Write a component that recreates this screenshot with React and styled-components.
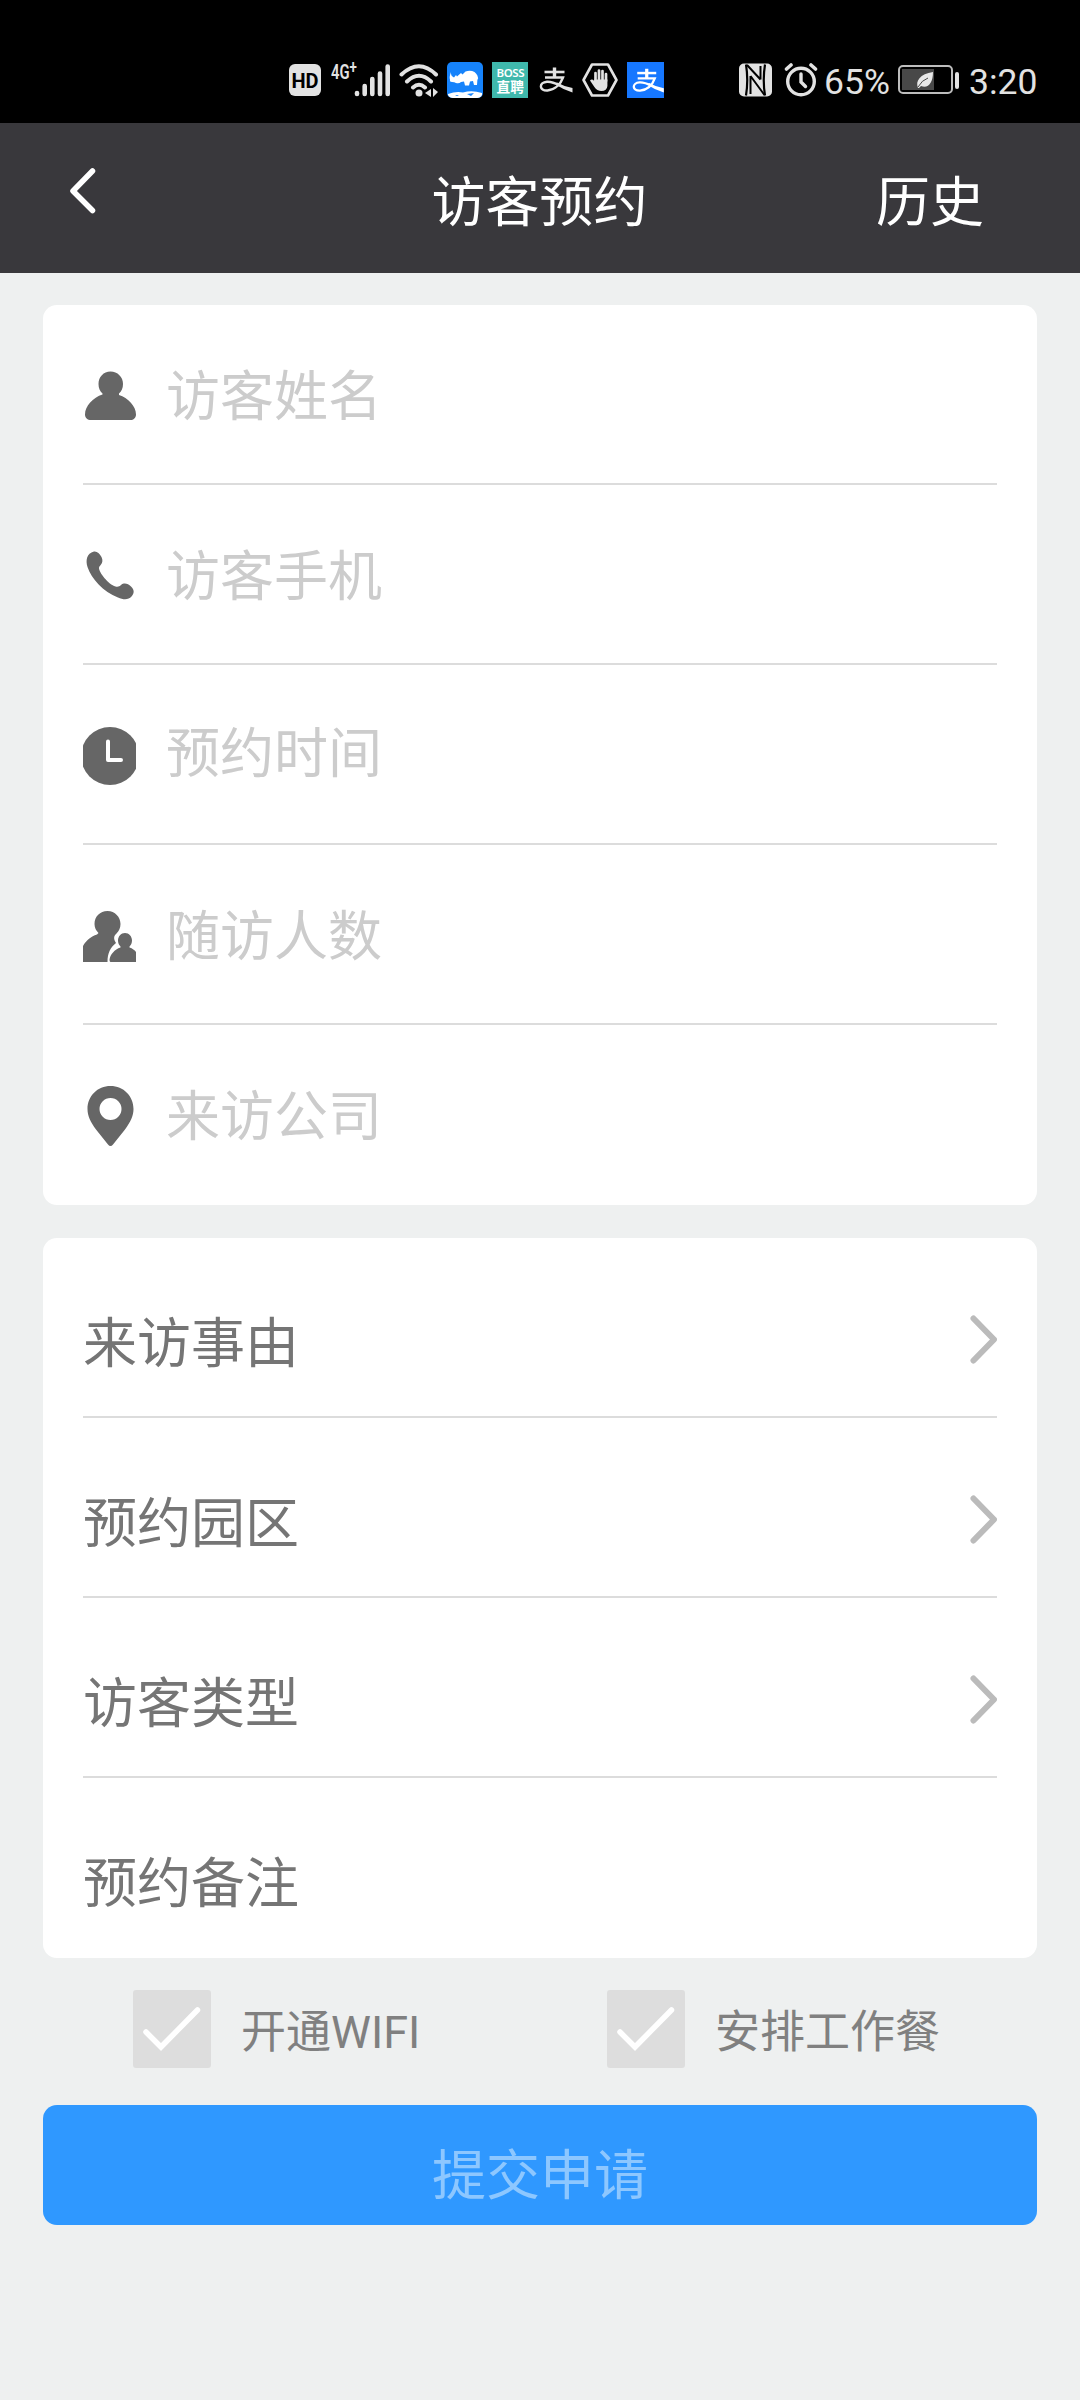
import React, { useState } from "react";
import styled, { createGlobalStyle } from "styled-components";

const fields = [
  { label: "访客姓名", icon: "user" },
  { label: "访客手机", icon: "phone" },
  { label: "预约时间", icon: "clock", drop: 1 },
  { label: "随访人数", icon: "users" },
  { label: "来访公司", icon: "pin" },
];

const options = [
  { label: "来访事由", arrow: true },
  { label: "预约园区", arrow: true },
  { label: "访客类型", arrow: true },
  { label: "预约备注", arrow: false },
];

const FieldIcon = ({ name }) => (
  <IconBox viewBox="0 0 53 62">
    {name === "user" && (
      <path d="M27.500 6.500C34.500 6.500 40 12 40 19c0 4-1.500 7.500-4 9.500v1.500c9 3 17 11 17 19.500 0 3.500-2.500 5.500-5.500 5.500H8c-3.500 0-6-2-6-5.500C2 41 10 32.500 19.500 29.500V28.500C17 26.500 15.500 23 15.500 19c0-7 5-12.500 12-12.500z" />
    )}
    {name === "phone" && (
      <path d="M11 6.500c3-.5 5.500 2 7.500 5.500 1.500 3 1 5.500-.5 7.500-1 1.500-2 2-2 3.500 0 4.500 9.500 16.500 16.500 18.500 2.500.5 4 0 5.500-1.500 3-2.500 7-1.500 10 1.500 3.500 3.500 3.500 6.500.5 10-3 3.500-8 3.500-13.500 1C20 46.500 8.500 34 4.500 22c-2-6.500-1-13.500 6.500-15.500z" />
    )}
    {name === "clock" && (
      <>
        <circle cx="27" cy="31" r="29" />
        <path d="M25 16.500v18.500h13" fill="none" stroke="#fff" strokeWidth="4" strokeLinecap="round" strokeLinejoin="round" />
      </>
    )}
    {name === "users" && (
      <>
        <path d="M24.500 6C32 6 37.500 12 37.500 19c0 4-1.500 7-4 9.500-3 2.500-3 5.500-.5 9.500-5.500 4.500-8.500 10-8.500 19H0V41c3.500-6 8-9.500 14-11.500l1.500-1.500C13 25.500 11.500 22.500 11.500 19 11.500 11.500 17 6 24.500 6z" />
        <path d="M42 28c4 0 7 3.500 7 7.500 0 2.500-1 4.500-2.500 6v1c3 1 5 2.500 6.500 4.500v10H27.500c-2-1-.5-6.500 2.500-9.500 2-2.500 4.500-4 7.500-5v-1c-1.500-1.500-2.500-3.500-2.500-6 0-4 3-7.500 7-7.500z" />
      </>
    )}
    {name === "pin" && (
      <path
        fillRule="evenodd"
        d="M27.500 1c13 0 23 10 23 23 0 7-3 13-8.500 20.500L30 59.500q-2.500 3-5 0L13 44.500C7.500 37 4.500 31 4.500 24c0-13 10-23 23-23zM27.500 13a11 11 0 1 0 .01 22 11 11 0 0 0-.01-22z"
      />
    )}
  </IconBox>
);

const PayMark = () => (
  <>
    <g fill="none" stroke="currentColor">
      <path d="M5.500 9h20" strokeWidth="2.600" />
      <path d="M15.500 4.500v10" strokeWidth="3.400" />
      <path d="M6 14.500h18C22 20 17 26.500 8.500 27.500 0 28 -.5 19.500 8 18.800 13 18.500 17 20.500 21 22.500" strokeWidth="2.400" />
    </g>
    <path d="M18 19.500q7 4 15.500 5.500v4.500Q24 26.500 16.500 21.500z" fill="currentColor" />
  </>
);

const StatusIcons = () => (
  <>
    <Glyphs>
      <svg width="32" height="32" viewBox="0 0 32 32">
        <rect width="32" height="32" rx="6" fill="#e2e2e2" />
        <text x="16" y="23.500" textAnchor="middle" fontFamily="Roboto, sans-serif" fontSize="20" fontWeight="700" fill="#000">HD</text>
      </svg>
      <Signal>
        <Network>
          4G<Plus>+</Plus>
        </Network>
        <Bars width="38" height="36" viewBox="0 0 38 36">
          <path d="M4 32v-1M11.700 32v-8M19.300 32v-15M27 32V11.500M34.700 32V4.500" stroke="#e2e2e2" strokeWidth="4.600" strokeLinecap="round" />
        </Bars>
      </Signal>
      <Wifi width="40" height="36" viewBox="0 0 40 36">
        <g fill="none" stroke="#e2e2e2" strokeWidth="4" strokeLinecap="round">
          <path d="M2.500 12.500Q20 -4 37 12.500M8 19.500Q20 8 32 19.500M14 25.500Q20 20 26 25.500" />
        </g>
        <circle cx="20" cy="31" r="3.500" fill="#e2e2e2" />
        <path d="M32 27v8l-6-4zM34 26l5 4-5 5z" fill="#e2e2e2" />
      </Wifi>
      <Rhino width="36" height="36" viewBox="0 0 36 36">
        <rect width="36" height="36" rx="5" fill="#1683fb" />
        <path d="M4 10q-.5 4 3 5.500L9 13l1 1.500 4-3.500 1.500 1.500 3-3q5-1.500 9 .5 4 3 3.500 8l-.5-1.500-.5 6.500h-3l-1-4-3 .5-1 4h-4l-1-4-3 .5q-2 2-5 1-1.500-1-4-1-2.500 0-2-2.500Q2 15.500 4 10z" fill="#fff" />
        <path d="M1 32q8-3 15-1.500 9-2.500 19 .5v2q-1.500 3-5 3H6q-3.500 0-5-3z" fill="#fff" />
        <path d="M20 32l7-1-3 3zM8 33h4l-2 1z" fill="#1683fb" />
      </Rhino>
      <svg width="36" height="36" viewBox="0 0 36 36">
        <rect width="36" height="36" fill="#3fb8ac" />
        <text x="4.500" y="14.500" textLength="28" fontFamily="'Noto Sans', sans-serif" fontSize="11.500" fontWeight="600" fill="#fff">BOSS</text>
        <text x="4.500" y="30" fontFamily="'Noto Sans CJK SC', sans-serif" fontSize="13.700" fontWeight="700" fill="#fff">直聘</text>
      </svg>
      <Pay width="35" height="34" viewBox="0 0 35 34">
        <PayMark />
      </Pay>
      <svg width="36" height="36" viewBox="0 0 36 36">
        <path d="M10 2.500h16L34.500 18 26 33.500H10L1.500 18z" fill="none" stroke="#e2e2e2" strokeWidth="2.600" strokeLinejoin="round" />
        <g stroke="#e2e2e2" strokeWidth="2.700" strokeLinecap="round">
          <path d="M13.500 19V11M17 18V8.500M20.500 18V9M24 19v-7" />
        </g>
        <path d="M12.200 17.500h13.200V24q-.5 5-6 5-4.500 0-7-4L8 18.500q2-2 4.200.5z" fill="#e2e2e2" />
      </svg>
      <BluePay width="37" height="36" viewBox="0 0 37 36">
        <rect width="37" height="36" fill="#1677ff" />
        <g transform="translate(5 2.500) scale(.95)">
          <PayMark />
        </g>
      </BluePay>
    </Glyphs>
    <Readout>
      <svg width="34" height="34" viewBox="0 0 34 34">
        <rect y=".5" width="33" height="33" rx="5" fill="#e2e2e2" />
        <path d="M7 1.500Q9.500 17 7 32.500M26 1.500Q23.500 17 26 32.500" stroke="#000" strokeWidth="2.200" fill="none" />
        <path d="M8 2l13.500 14.500M11.500 13L25.500 32M11.500 13v18M21.500 3v13.500" stroke="#000" strokeWidth="2" fill="none" />
      </svg>
      <Alarm width="34" height="34" viewBox="0 0 34 34">
        <g fill="none" stroke="#e2e2e2" strokeLinecap="round">
          <circle cx="17" cy="18.500" r="13.300" strokeWidth="3.400" />
          <path d="M17 11v8l4.500 4.500" strokeWidth="3.400" />
          <path d="M2.500 6L7 2M31.500 6L27 2" strokeWidth="3.600" />
        </g>
      </Alarm>
      <StatusText width="65">65%</StatusText>
      <Battery width="62" height="30" viewBox="0 0 62 30">
        <rect x="1" y="1" width="53" height="27" rx="4" fill="none" stroke="#bdbdbd" strokeWidth="2" />
        <rect x="4" y="4" width="32" height="21" fill="#484848" />
        <path d="M20 23c-3-7 2-14 15-16 0 11-5 17-12 14l-2 2z" fill="#e8e8e8" />
        <path d="M20 22q4-7 10-9" stroke="#484848" fill="none" />
        <rect x="57" y="7" width="4" height="17" rx="2" fill="#e2e2e2" />
      </Battery>
      <StatusText width="69">3:20</StatusText>
    </Readout>
  </>
);

const App = () => {
  const [wifi, setWifi] = useState(false);
  const [meal, setMeal] = useState(false);

  return (
    <Page>
      <GlobalStyle />
      <StatusBar>
        <StatusIcons />
      </StatusBar>
      <Header>
        <Back viewBox="0 0 28 46">
          <path d="M23.500 3L4 23l19.500 19.500" />
        </Back>
        <Title>访客预约</Title>
        <History>历史</History>
      </Header>
      <Body>
        <Card>
          {fields.map((item) => (
            <Row key={item.label}>
              <FieldIcon name={item.icon} />
              <Placeholder drop={item.drop}>{item.label}</Placeholder>
            </Row>
          ))}
        </Card>
        <Card>
          {options.map((item) => (
            <Row key={item.label}>
              <Label>{item.label}</Label>
              {item.arrow ? (
                <Arrow viewBox="0 0 27 49">
                  <path d="M3.500 3.500L24 24.500 3.500 45.500" />
                </Arrow>
              ) : null}
            </Row>
          ))}
        </Card>
        <Checks>
          <CheckItem onClick={() => setWifi(!wifi)}>
            <CheckBox checked={wifi} viewBox="0 0 78 78">
              <path d="M13 42l15 15L64.500 20" />
            </CheckBox>
            <CheckText>开通WIFI</CheckText>
          </CheckItem>
          <CheckItem onClick={() => setMeal(!meal)}>
            <CheckBox checked={meal} viewBox="0 0 78 78">
              <path d="M13 42l15 15L64.500 20" />
            </CheckBox>
            <CheckText>安排工作餐</CheckText>
          </CheckItem>
        </Checks>
        <Submit>提交申请</Submit>
      </Body>
    </Page>
  );
};

export default App;

const GlobalStyle = createGlobalStyle`
  * {
    box-sizing: border-box;
  }
  body {
    margin: 0;
    background-color: #eef0f0;
    font-family: Roboto, "Noto Sans CJK SC", sans-serif;
  }
  svg {
    display: block;
    flex-shrink: 0;
  }
`;

const Page = styled.div`
  width: 1080px;
  height: 2400px;
  background-color: #eef0f0;
  overflow: hidden;
`;

const StatusBar = styled.div`
  height: 123px;
  padding: 61px 42px 0 289px;
  display: flex;
  justify-content: space-between;
  background-color: #000;
  color: #e2e2e2;
`;

const Glyphs = styled.div`
  height: 37px;
  display: flex;
  align-items: center;
`;

const Signal = styled.div`
  width: 60px;
  height: 36px;
  margin-left: 10px;
  display: flex;
  align-items: flex-start;
`;

const Network = styled.span`
  width: 38px;
  flex-shrink: 0;
  display: flex;
  font-size: 20px;
  font-weight: 600;
  line-height: 20px;
  transform: scaleX(0.74);
  transform-origin: left top;
`;

const Plus = styled.span`
  font-size: 18px;
  line-height: 10px;
`;

const Bars = styled.svg`
  margin-left: -16px;
`;

const Wifi = styled.svg`
  margin-left: 8px;
`;

const Rhino = styled.svg`
  margin-left: 8px;
  margin-right: 9px;
`;

const Pay = styled.svg`
  margin: 0 8px 0 11px;
`;

const BluePay = styled.svg`
  margin-left: 9px;
  color: #fff;
`;

const Readout = styled.div`
  height: 37px;
  display: flex;
  align-items: center;
`;

const Alarm = styled.svg`
  margin: 0 6px 0 11px;
`;

const Battery = styled.svg`
  margin: 0 9px 0 9px;
`;

const StatusText = styled.span`
  width: ${({ width }) => width}px;
  padding-top: 4px;
  font-size: 35.5px;
  line-height: 40px;
  white-space: nowrap;
`;

const Header = styled.div`
  height: 150px;
  padding: 0 96px 0 69px;
  display: grid;
  grid-template-columns: 254px 1fr 254px;
  align-items: center;
  background-color: #39383c;
  color: #fff;
  font-size: 54px;
  line-height: 80px;
`;

const Back = styled.svg`
  width: 28px;
  height: 46px;
  margin-bottom: 15px;
  fill: none;
  stroke: #fff;
  stroke-width: 5.5;
  stroke-linecap: round;
  stroke-linejoin: round;
`;

const Title = styled.div`
  padding: 11px 0 0 26px;
  text-align: center;
`;

const History = styled.div`
  padding-top: 11px;
  text-align: right;
`;

const Body = styled.div`
  padding: 32px 43px 0;
`;

const Card = styled.div`
  margin-bottom: 33px;
  padding: 0 40px;
  background-color: #fff;
  border-radius: 14px;

  & + & {
    margin-bottom: 32px;
  }
`;

const Row = styled.div`
  height: 180px;
  display: flex;
  align-items: center;
  border-bottom: 2px solid #dcdcdc;

  &:last-child {
    border-bottom-color: transparent;
  }
`;

const IconBox = styled.svg`
  width: 53px;
  height: 62px;
  margin-top: 3px;
  margin-right: 30px;
  fill: #666;
`;

const Placeholder = styled.span`
  padding-top: ${({ drop = 7 }) => drop}px;
  font-size: 54px;
  line-height: 80px;
  color: #ccc;
`;

const Label = styled.span`
  flex: 1;
  padding-top: 36px;
  font-size: 54px;
  line-height: 80px;
  color: #757575;
`;

const Arrow = styled.svg`
  width: 27px;
  height: 49px;
  margin-top: 25px;
  fill: none;
  stroke: #bbb;
  stroke-width: 6;
  stroke-linecap: round;
  stroke-linejoin: round;
`;

const Checks = styled.div`
  height: 78px;
  margin-bottom: 37px;
  padding-left: 90px;
  display: flex;
`;

const CheckItem = styled.div`
  width: 474px;
  flex-shrink: 0;
  display: flex;
  align-items: center;
  cursor: pointer;
`;

const CheckBox = styled.svg`
  width: 78px;
  height: 78px;
  margin-right: 30px;
  border-radius: 3px;
  background-color: ${({ checked }) => (checked ? "#2f98ff" : "#ddd")};
  fill: none;
  stroke: #fff;
  stroke-width: 5.5;
  stroke-linecap: round;
`;

const CheckText = styled.span`
  padding-top: 8px;
  font-size: 45px;
  line-height: 66px;
  color: #808080;
`;

const Submit = styled.button`
  display: block;
  width: 100%;
  height: 120px;
  padding: 24px 0 0;
  border: none;
  border-radius: 14px;
  background-color: #2f98ff;
  color: #8dc7ff;
  font-family: inherit;
  font-size: 54px;
  line-height: 80px;
`;
